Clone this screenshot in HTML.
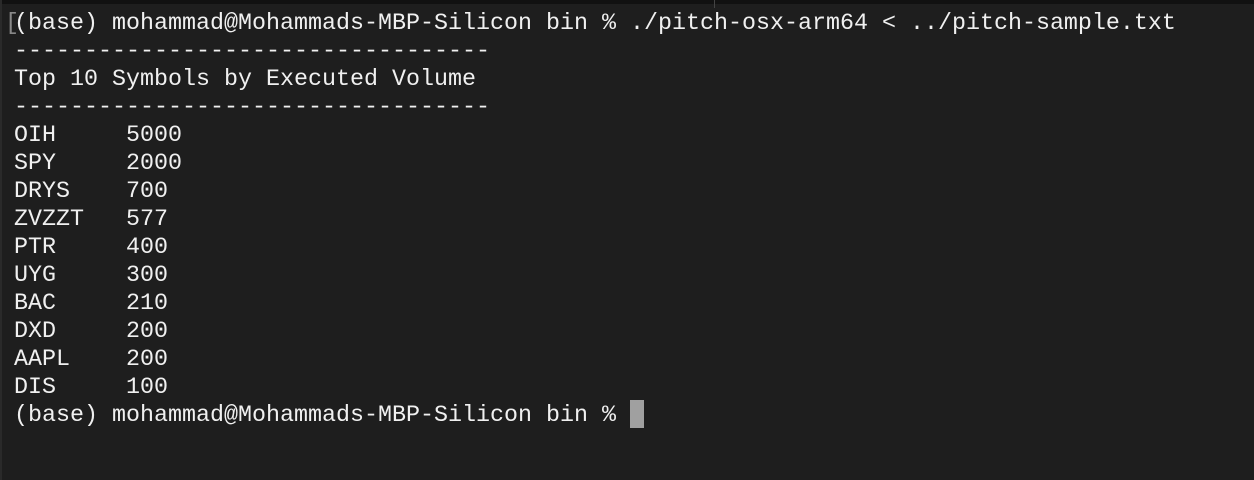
<!DOCTYPE html>
<html><head><style>
html,body{margin:0;padding:0;}
body{width:1254px;height:480px;background:#1e1e1e;overflow:hidden;position:relative;}
.top{position:absolute;left:0;top:0;width:1254px;height:4px;background:#111;}
.tick{position:absolute;left:714px;top:0;width:1px;height:8px;background:#444;}
.left{position:absolute;left:0;top:0;width:2px;height:480px;background:#2a2a2a;}
pre{position:absolute;left:14px;top:10px;margin:0;font-family:"Liberation Mono",monospace;font-size:23.33px;line-height:28px;color:#f0f0f0;}
.br{position:absolute;left:5px;top:10px;font-family:"Liberation Mono",monospace;font-size:23.33px;line-height:28px;color:#888;}
.cur{position:absolute;left:630px;top:400px;width:14px;height:28px;background:#a0a0a0;}
</style></head><body>
<div class="top"></div><div class="tick"></div><div class="left"></div>
<div class="br">[</div>
<pre>(base) mohammad@Mohammads-MBP-Silicon bin % ./pitch-osx-arm64 &lt; ../pitch-sample.txt
----------------------------------
Top 10 Symbols by Executed Volume
----------------------------------
OIH     5000
SPY     2000
DRYS    700
ZVZZT   577
PTR     400
UYG     300
BAC     210
DXD     200
AAPL    200
DIS     100
(base) mohammad@Mohammads-MBP-Silicon bin % </pre>
<div class="cur"></div>
</body></html>
